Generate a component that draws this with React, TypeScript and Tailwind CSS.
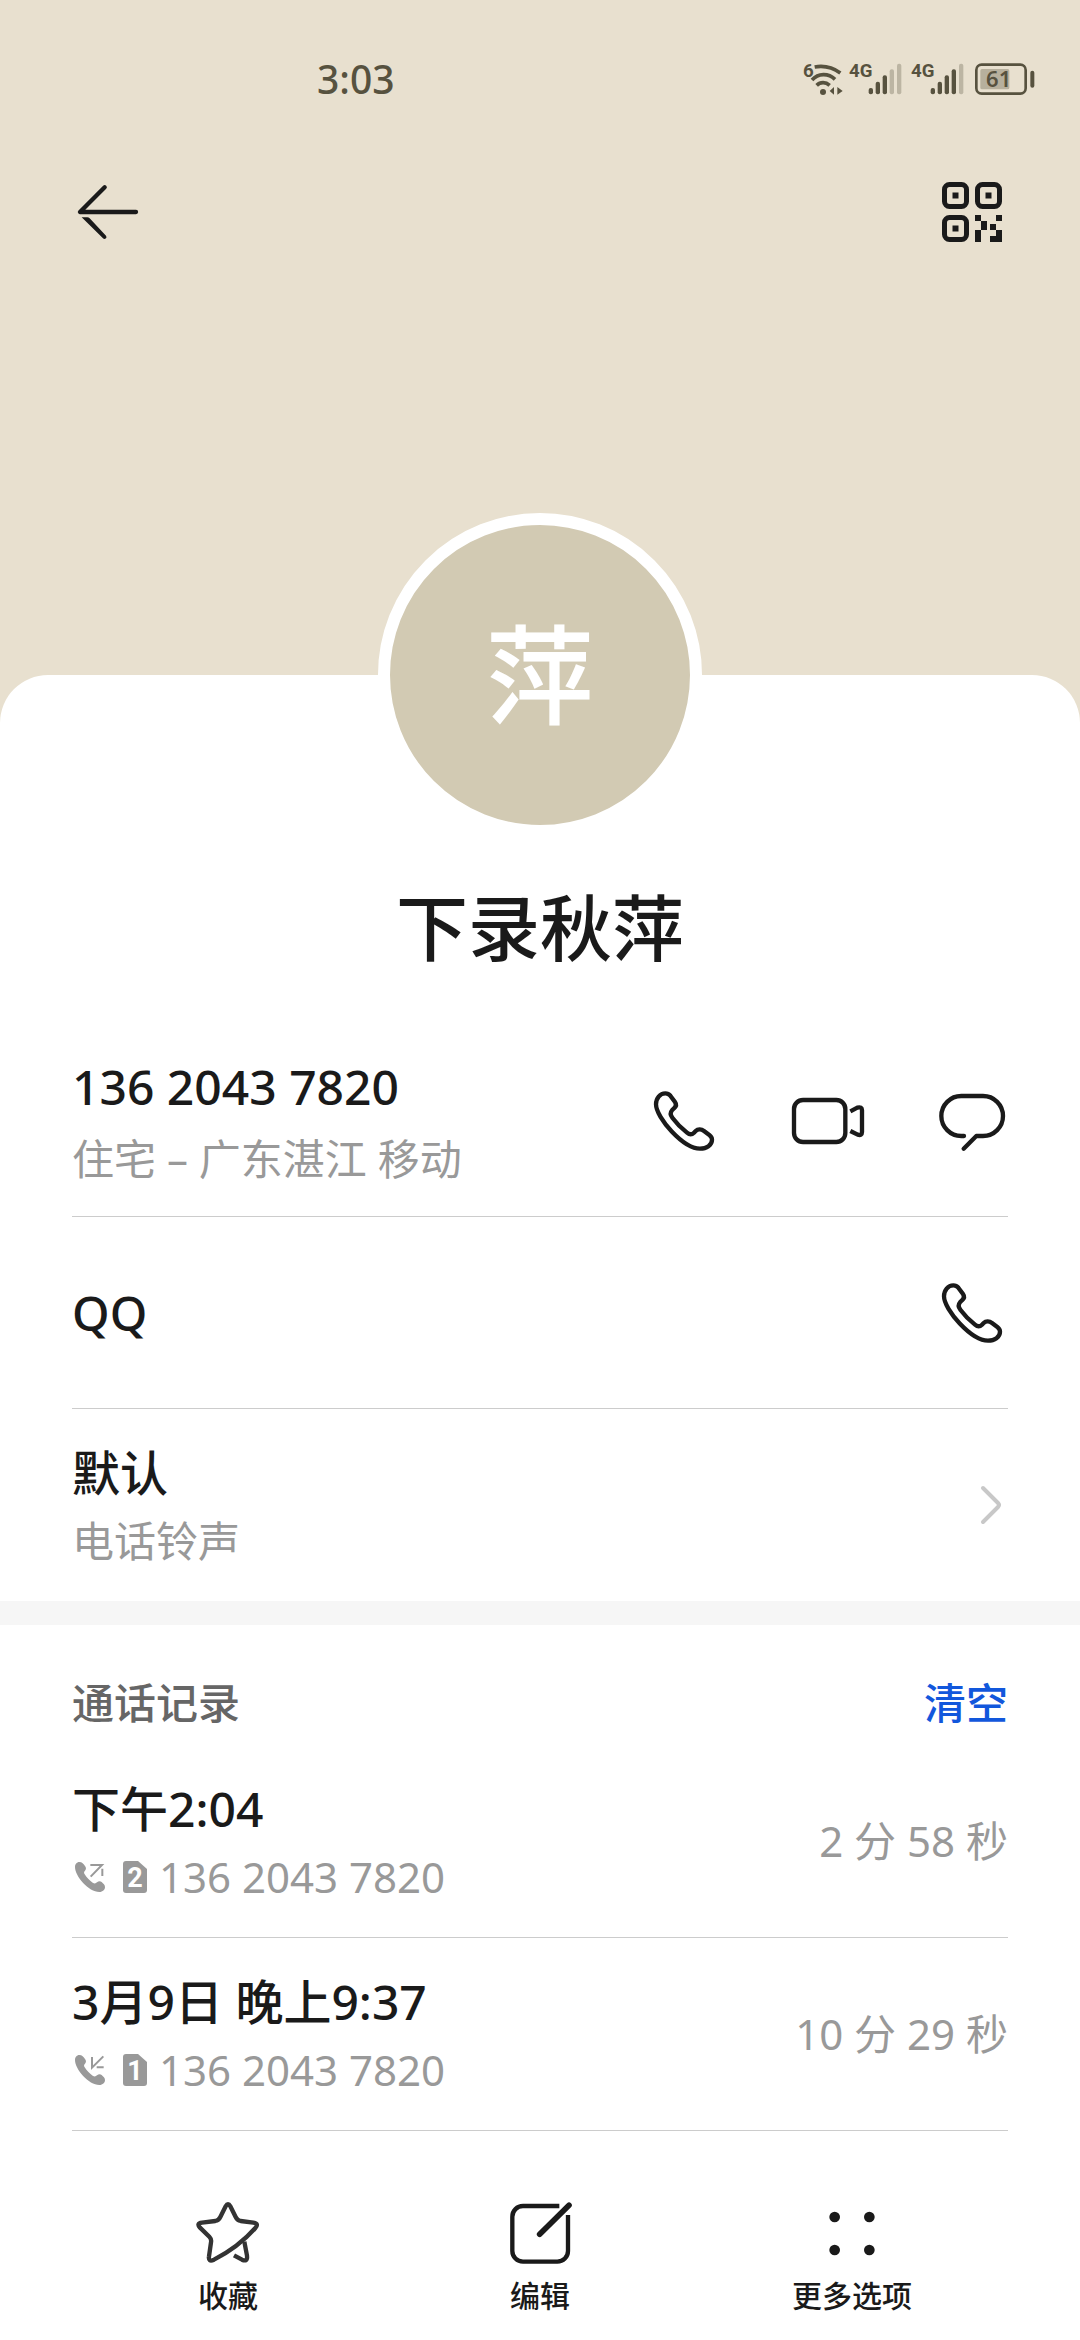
import type { ReactNode } from "react";

type IconProps = { children: ReactNode; className?: string };

/* Line icons share a 216-unit grid, drawn at 72px. */
function LineIcon({ children, className = "" }: IconProps) {
  return (
    <svg
      viewBox="0 0 216 216"
      className={"size-18 shrink-0 overflow-visible " + className}
      fill="none"
      stroke="currentColor"
      strokeWidth="13"
      strokeLinecap="round"
      strokeLinejoin="round"
      aria-hidden="true"
    >
      {children}
    </svg>
  );
}

function PhoneIcon() {
  return (
    <LineIcon>
      <path d="M52 25C36 25 24 40 24 58C24 98 106 191 156 191C176 191 192 180 192 164C192 158 188 153 184 150L168 138C160 132 150 131 143 138L138 143C132 149 124 149 117 143C101 130 84 113 73 98C66 89 66 83 72 76L78 70C85 64 86 58 81 51L67 32C63 27 58 25 52 25Z" />
    </LineIcon>
  );
}

function VideoIcon() {
  return (
    <LineIcon>
      <rect x="6" y="45" width="154" height="126" rx="27" />
      <path strokeLinecap="butt" d="M175 79L196 68Q210 64 210 76V141Q210 153 197 149L175 138" />
    </LineIcon>
  );
}

function ChatIcon() {
  return (
    <LineIcon>
      <path d="M84 153H76a60 60 0 0 1 0-120H141a60 60 0 0 1 0 120H121L83 191" />
    </LineIcon>
  );
}

function StarIcon() {
  return (
    <LineIcon className="text-[#333333]">
      <path d="M101 28Q108 15 115 28L131 60Q136 70 146 72L184 77Q202 80 190 93Q140 150 66 188Q48 196 51 178L57 136Q59 126 52 119L24 92Q12 79 30 77L70 72Q80 70 85 60Z" />
      <path strokeLinecap="butt" d="M157 134L165 176Q167 196 150 188L126 175" />
    </LineIcon>
  );
}

function EditIcon() {
  return (
    <LineIcon>
      <path
        strokeLinecap="butt"
        d="M166 27H57a32 32 0 0 0-32 32V162a32 32 0 0 0 32 32H160a32 32 0 0 0 32-32V54"
      />
      <path strokeWidth="17" d="M195 25L107 112" />
    </LineIcon>
  );
}

function MoreIcon() {
  return (
    <LineIcon>
      <g fill="currentColor" stroke="none">
        <circle cx="56" cy="60" r="16" />
        <circle cx="160" cy="60" r="16" />
        <circle cx="56" cy="159" r="16" />
        <circle cx="160" cy="159" r="16" />
      </g>
    </LineIcon>
  );
}

function BackIcon() {
  return (
    <svg viewBox="0 0 216 216" className="size-18" fill="none" stroke="currentColor" strokeWidth="13" strokeLinecap="round" strokeLinejoin="round" aria-hidden="true">
      <path d="M98 34L24 108H192" />
      <path fill="currentColor" stroke="none" d="M29 124H46Q50 124 53 127L102 179Q105 184 102 187Q97 191 93 187Z" />
    </svg>
  );
}

function QrIcon() {
  return (
    <svg viewBox="0 0 72 72" className="size-18" fill="currentColor" aria-hidden="true">
      <g fill="none" stroke="currentColor" strokeWidth="5">
        <rect x="8.5" y="8.5" width="22" height="22" rx="5" />
        <rect x="41.5" y="8.5" width="22" height="22" rx="5" />
        <rect x="8.5" y="41.5" width="22" height="22" rx="5" />
      </g>
      <rect x="16.5" y="16.5" width="6" height="6" />
      <rect x="49.5" y="16.5" width="6" height="6" />
      <rect x="16.5" y="49.5" width="6" height="6" />
      <path d="M39 39h6v6h6v9h-6v-9h-6zM60 39h6v6h-6zM54 48h6v6h-6zM39 54h6v12h-6zM60 54h6v12h-12v-6h6z" />
    </svg>
  );
}

function WifiIcon() {
  return (
    <svg viewBox="0 0 120 96" className="-mr-1 h-8 w-10 overflow-visible" fill="none" stroke="currentColor" strokeWidth="11" strokeLinecap="butt" aria-hidden="true">
      <text x="0" y="42" fontSize="56" fontWeight="700" fill="currentColor" stroke="none" fontFamily="Roboto, sans-serif">6</text>
      <path d="M35 12C62 7 90 14 112 30" />
      <path d="M27 51C46 30 76 30 96 49" />
      <path d="M41 67C52 56 68 56 80 67" />
      <circle cx="60" cy="87" r="9" fill="currentColor" stroke="none" />
      <path fill="currentColor" stroke="none" d="M80 84L93 72V95ZM119 84L103 72V95Z" />
    </svg>
  );
}

function SignalIcon({ strength }: { strength: number }) {
  const bars = [
    { x: 53, y: 75 },
    { x: 74, y: 56 },
    { x: 95, y: 37 },
    { x: 116, y: 19 },
    { x: 138, y: 2 },
  ];
  return (
    <svg viewBox="0 0 150 96" className="h-8 w-[50px] overflow-visible" fill="currentColor" aria-hidden="true">
      <text x="-6" y="42" fontSize="56" fontWeight="700" fontFamily="Roboto, sans-serif">4G</text>
      {bars.map((bar, index) => (
        <rect key={bar.x} x={bar.x} y={bar.y} width="13" height={94 - bar.y} rx="6" opacity={index < strength ? 1 : 0.3} />
      ))}
    </svg>
  );
}

function BatteryIcon() {
  return (
    <svg viewBox="0 0 180 96" className="h-8 w-15" fill="currentColor" aria-hidden="true">
      <rect x="4" y="5" width="148" height="87" rx="16" fill="none" stroke="currentColor" strokeWidth="8" />
      <rect x="16" y="18" width="87" height="61" rx="5" fill="#b7b09d" />
      <rect x="166" y="23" width="12" height="51" rx="6" />
      <text x="71" y="72" fontSize="66" fontWeight="600" textAnchor="middle" fontFamily="Noto Sans, sans-serif">61</text>
    </svg>
  );
}

function CallDirectionIcon({ outgoing }: { outgoing: boolean }) {
  return (
    <svg viewBox="0 0 108 108" className="size-9 shrink-0" role="img" aria-label={outgoing ? "呼出" : "呼入"}>
      <path
        fill="currentColor"
        d="M22 9C14 9 9 16 9 24C9 52 50 99 82 99C92 99 99 92 99 84C99 78 94 74 89 69C84 65 79 67 75 70C71 74 67 74 62 71C54 66 44 56 38 46C35 41 36 38 39 35C43 31 43 26 39 21C35 15 30 9 22 9Z"
      />
      <path
        fill="none"
        stroke="currentColor"
        strokeWidth="6"
        d={outgoing ? "M55 18H90L56 53M91 29V51" : "M60 15V47L94 13M74 46H95"}
      />
    </svg>
  );
}

function SimIcon({ slot }: { slot: number }) {
  return (
    <svg viewBox="0 0 24 32" className="h-8 w-6 shrink-0" aria-hidden="true">
      <path fill="currentColor" d="M3 0H15L24 8V29Q24 32 21 32H3Q0 32 0 29V3Q0 0 3 0Z" />
      <text x="12" y="26" fontSize="27" fontWeight="700" textAnchor="middle" fill="#ffffff" fontFamily="Roboto, sans-serif">
        {slot}
      </text>
    </svg>
  );
}

const calls = [
  { time: "下午2:04", outgoing: true, slot: 2, number: "136 2043 7820", duration: "2 分 58 秒" },
  { time: "3月9日 晚上9:37", outgoing: false, slot: 1, number: "136 2043 7820", duration: "10 分 29 秒" },
];

const actions = [
  { label: "收藏", icon: <StarIcon /> },
  { label: "编辑", icon: <EditIcon /> },
  { label: "更多选项", icon: <MoreIcon /> },
];

export default function App() {
  return (
    <div className="flex min-h-screen flex-col bg-[#e8e0cf] font-['Noto_Sans','Noto_Sans_CJK_SC',sans-serif] text-[#1a1a1a]">
      <header className="pb-[409px]">
        <div className="flex h-[158px] items-center justify-between pr-[45px] pl-[317px] text-[#57523f]">
          <span className="text-[39px] leading-[48px] font-medium">3:03</span>
          <div className="flex items-center gap-3">
            <WifiIcon />
            <SignalIcon strength={3} />
            <SignalIcon strength={4} />
            <BatteryIcon />
          </div>
        </div>
        <div className="flex h-[108px] items-center justify-between px-[72px]">
          <button type="button" aria-label="返回">
            <BackIcon />
          </button>
          <button type="button" aria-label="二维码">
            <QrIcon />
          </button>
        </div>
      </header>

      <main className="flex grow flex-col rounded-t-[48px] bg-white">
        <div className="mx-auto -mt-[162px] flex size-[324px] items-center justify-center rounded-full border-12 border-white bg-[#d2cab3] text-[108px] leading-none font-medium text-white">
          萍
        </div>
        <h1 className="mt-[42px] text-center text-[72px] leading-[96px] font-medium">下录秋萍</h1>

        <section className="mt-[50px] px-[72px]">
          <div className="flex min-h-48 items-center justify-between border-b border-[#cccccc]">
            <div>
              <p className="text-[48px] leading-[72px] font-medium">136 2043 7820</p>
              <p className="mt-1 text-[42px] leading-[64px] text-[#999999]">住宅 – 广东湛江 移动</p>
            </div>
            <div className="flex gap-[72px]">
              <button type="button" aria-label="拨打电话">
                <PhoneIcon />
              </button>
              <button type="button" aria-label="视频通话">
                <VideoIcon />
              </button>
              <button type="button" aria-label="发送信息">
                <ChatIcon />
              </button>
            </div>
          </div>
          <div className="flex min-h-48 items-center justify-between border-b border-[#cccccc]">
            <p className="text-[48px] leading-[72px] font-medium">QQ</p>
            <button type="button" aria-label="QQ 通话">
              <PhoneIcon />
            </button>
          </div>
          <button type="button" className="flex min-h-48 w-full items-center justify-between text-left">
            <span className="flex flex-col">
              <span className="text-[48px] leading-[72px] font-medium">默认</span>
              <span className="text-[42px] leading-[64px] text-[#999999]">电话铃声</span>
            </span>
            <svg viewBox="0 0 36 48" className="h-12 w-9" fill="none" stroke="#c8c8c8" strokeWidth="4" strokeLinecap="round" strokeLinejoin="round" aria-hidden="true">
              <path d="M11 7L26 22Q28 24 26 26L11 41" />
            </svg>
          </button>
        </section>

        <div className="h-6 bg-[#f6f6f6]" />

        <section className="px-[72px]">
          <div className="flex h-[120px] items-center justify-between pt-9 text-[42px] leading-[64px] font-medium">
            <h2 className="text-[#666666]">通话记录</h2>
            <button type="button" className="text-[#1257dc]">
              清空
            </button>
          </div>
          <ul>
            {calls.map((call) => (
              <li key={call.time} className="flex min-h-[193px] items-center justify-between border-b border-[#cccccc]">
                <div>
                  <p className="text-[48px] leading-[72px] font-medium">{call.time}</p>
                  <div className="flex items-center text-[42px] leading-[64px] text-[#999999]">
                    <CallDirectionIcon outgoing={call.outgoing} />
                    <span className="mr-3 ml-[15px]">
                      <SimIcon slot={call.slot} />
                    </span>
                    <span>{call.number}</span>
                  </div>
                </div>
                <span className="text-[42px] leading-[64px] text-[#999999]">{call.duration}</span>
              </li>
            ))}
          </ul>
        </section>

        <nav className="mt-auto grid grid-cols-3 px-[72px] pt-16 pb-6">
          {actions.map((action) => (
            <button key={action.label} type="button" className="flex flex-col items-center gap-[7px] text-[30px] leading-[40px] font-medium">
              {action.icon}
              {action.label}
            </button>
          ))}
        </nav>
      </main>
    </div>
  );
}
